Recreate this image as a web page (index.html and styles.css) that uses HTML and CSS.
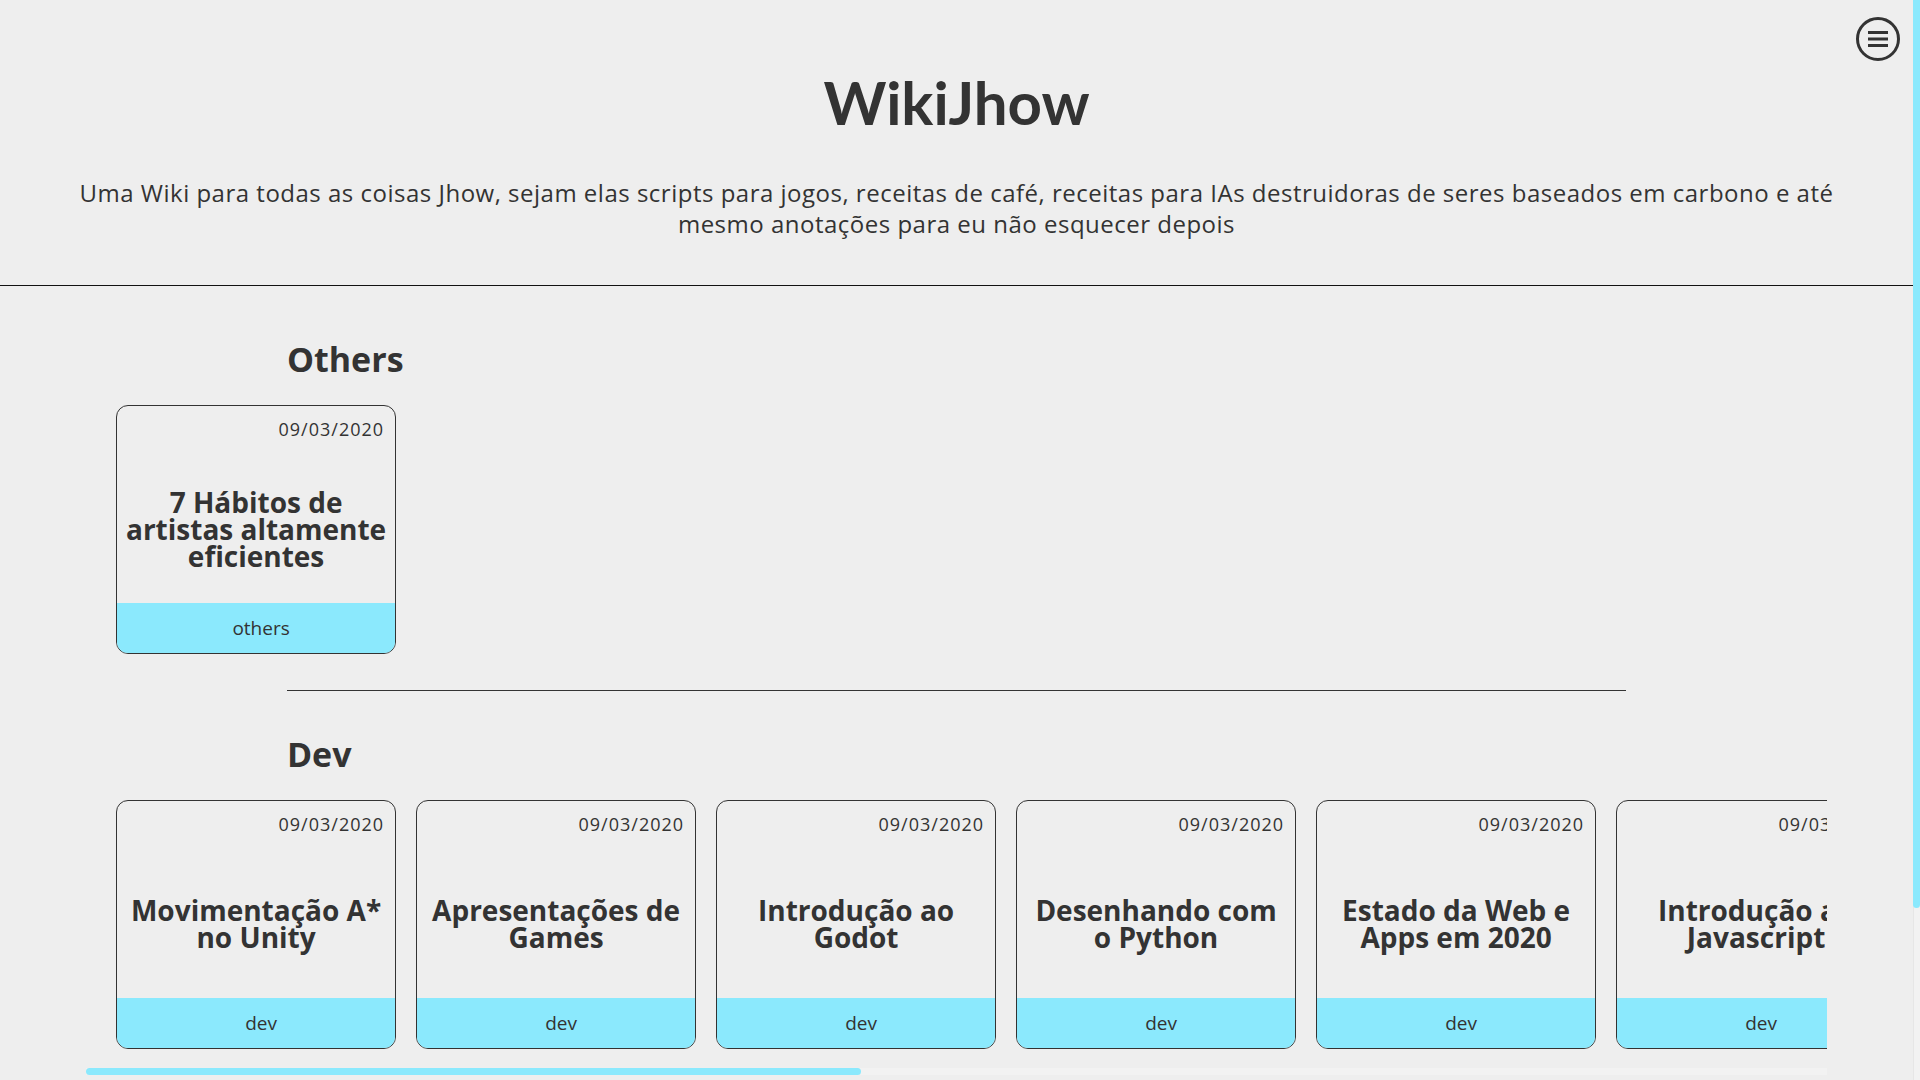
FILE: index.html
```html
<!DOCTYPE html>
<html lang="pt-BR">
<head>
<meta charset="utf-8">
<title>WikiJhow</title>
<link rel="stylesheet" href="styles.css">
</head>
<body>
<div class="page">
  <header class="site-header">
    <h1 class="site-title">WikiJhow</h1>
    <p class="site-desc">Uma Wiki para todas as coisas Jhow, sejam elas scripts para jogos, receitas de café, receitas para IAs destruidoras de seres baseados em carbono e até mesmo anotações para eu não esquecer depois</p>
  </header>
  <main class="content">
    <section class="category">
      <h2 class="category-title">Others</h2>
      <div class="cards">
        <article class="card">
          <div class="card-date">09/03/2020</div>
          <div class="card-title">7 Hábitos de artistas altamente eficientes</div>
          <div class="card-tag">others</div>
        </article>
      </div>
      <hr class="divider">
    </section>
    <section class="category">
      <h2 class="category-title">Dev</h2>
      <div class="cards">
        <article class="card"><div class="card-date">09/03/2020</div><div class="card-title">Movimentação A* no Unity</div><div class="card-tag">dev</div></article>
        <article class="card"><div class="card-date">09/03/2020</div><div class="card-title">Apresentações de Games</div><div class="card-tag">dev</div></article>
        <article class="card"><div class="card-date">09/03/2020</div><div class="card-title">Introdução ao Godot</div><div class="card-tag">dev</div></article>
        <article class="card"><div class="card-date">09/03/2020</div><div class="card-title">Desenhando com o Python</div><div class="card-tag">dev</div></article>
        <article class="card"><div class="card-date">09/03/2020</div><div class="card-title">Estado da Web e Apps em 2020</div><div class="card-tag">dev</div></article>
        <article class="card"><div class="card-date">09/03/2020</div><div class="card-title">Introdução ao Javascript</div><div class="card-tag">dev</div></article>
        <article class="card"><div class="card-date">09/03/2020</div><div class="card-title">Git para iniciantes</div><div class="card-tag">dev</div></article>
        <article class="card"><div class="card-date">09/03/2020</div><div class="card-title">Shaders no Godot</div><div class="card-tag">dev</div></article>
        <article class="card"><div class="card-date">09/03/2020</div><div class="card-title">Flexbox na prática</div><div class="card-tag">dev</div></article>
        <article class="card"><div class="card-date">09/03/2020</div><div class="card-title">CSS Grid Layout</div><div class="card-tag">dev</div></article>
        <article class="card"><div class="card-date">09/03/2020</div><div class="card-title">Docker para Devs</div><div class="card-tag">dev</div></article>
        <article class="card"><div class="card-date">09/03/2020</div><div class="card-title">Linux no dia a dia</div><div class="card-tag">dev</div></article>
        <article class="card"><div class="card-date">09/03/2020</div><div class="card-title">APIs com Node.js</div><div class="card-tag">dev</div></article>
      </div>
      <div class="hscroll"><div class="hscroll-thumb"></div></div>
    </section>
  </main>
</div>
<button class="menu-btn" aria-label="Menu">
  <svg width="48" height="48" viewBox="0 0 48 48">
    <circle cx="24" cy="24" r="20.5" fill="none" stroke="#333" stroke-width="3"/>
    <path d="M14 17.5H34M14 24H34M14 30.5H34" stroke="#333" stroke-width="3"/>
  </svg>
</button>
<div class="vscroll"><div class="vscroll-thumb"></div></div>
</body>
</html>
```
FILE: styles.css
```css
html {
  background: #eeeeee;
}
body {
  margin: 0;
  font-family: "Open Sans", Lato, sans-serif;
  color: #333;
  background: #eeeeee;
}
.page {
  margin-right: 7px;
}
.vscroll {
  position: fixed;
  top: 0;
  right: 0;
  width: 7px;
  height: 100vh;
  background: #f2f2f2;
  box-shadow: inset 1px 0 0 #e6e6e6;
}
.vscroll-thumb {
  height: 908px;
  background: #8be9fd;
  border-radius: 0 0 4px 4px;
}
.menu-btn {
  position: fixed;
  top: 15px;
  right: 18px;
  width: 48px;
  height: 48px;
  padding: 0;
  border: none;
  background: transparent;
  cursor: pointer;
}
.menu-btn svg {
  display: block;
}
.site-header {
  padding: 66px 0 46px;
  border-bottom: 1px solid #111;
  text-align: center;
}
.site-title {
  margin: 0;
  font-family: Lato, "Open Sans", sans-serif;
  font-size: 60px;
  line-height: 72px;
  font-weight: 700;
}
.site-desc {
  margin: 39px 0 0;
  padding: 0 66px;
  font-size: 24px;
  line-height: 31px;
  letter-spacing: 0.5px;
}
.content {
  padding: 10px 0 210px;
}
.category-title {
  width: 70%;
  margin: 42px auto 25px;
  font-size: 34px;
  line-height: 42px;
  font-weight: 700;
}
.cards {
  width: 91%;
  margin: 0 auto;
  box-sizing: border-box;
  padding: 0 30px 19px;
  display: flex;
  gap: 20px;
  overflow: hidden;
}
.card {
  flex: 0 0 280px;
  height: 249px;
  box-sizing: border-box;
  border: 1px solid #333;
  border-radius: 12px;
  overflow: hidden;
  display: flex;
  flex-direction: column;
}
.card-date {
  padding: 12px 11px 15px;
  text-align: right;
  font-size: 18px;
  line-height: 22px;
  letter-spacing: 1px;
}
.card-title {
  flex: 1;
  display: flex;
  align-items: center;
  justify-content: center;
  padding: 0 7px;
  text-align: center;
  font-size: 28px;
  line-height: 27px;
  font-weight: 700;
}
.card-tag {
  height: 50px;
  line-height: 50px;
  padding-left: 10px;
  text-align: center;
  font-size: 19px;
  background: #8be9fd;
}
.hscroll {
  width: 91%;
  height: 7px;
  margin: 0 auto;
  background: #f2f2f2;
}
.hscroll-thumb {
  width: 44.5%;
  height: 100%;
  background: #8be9fd;
  border-radius: 4px;
}
.divider {
  width: 70%;
  height: 0;
  margin: 17px auto 0;
  border: none;
  border-top: 1px solid #333;
}
```
